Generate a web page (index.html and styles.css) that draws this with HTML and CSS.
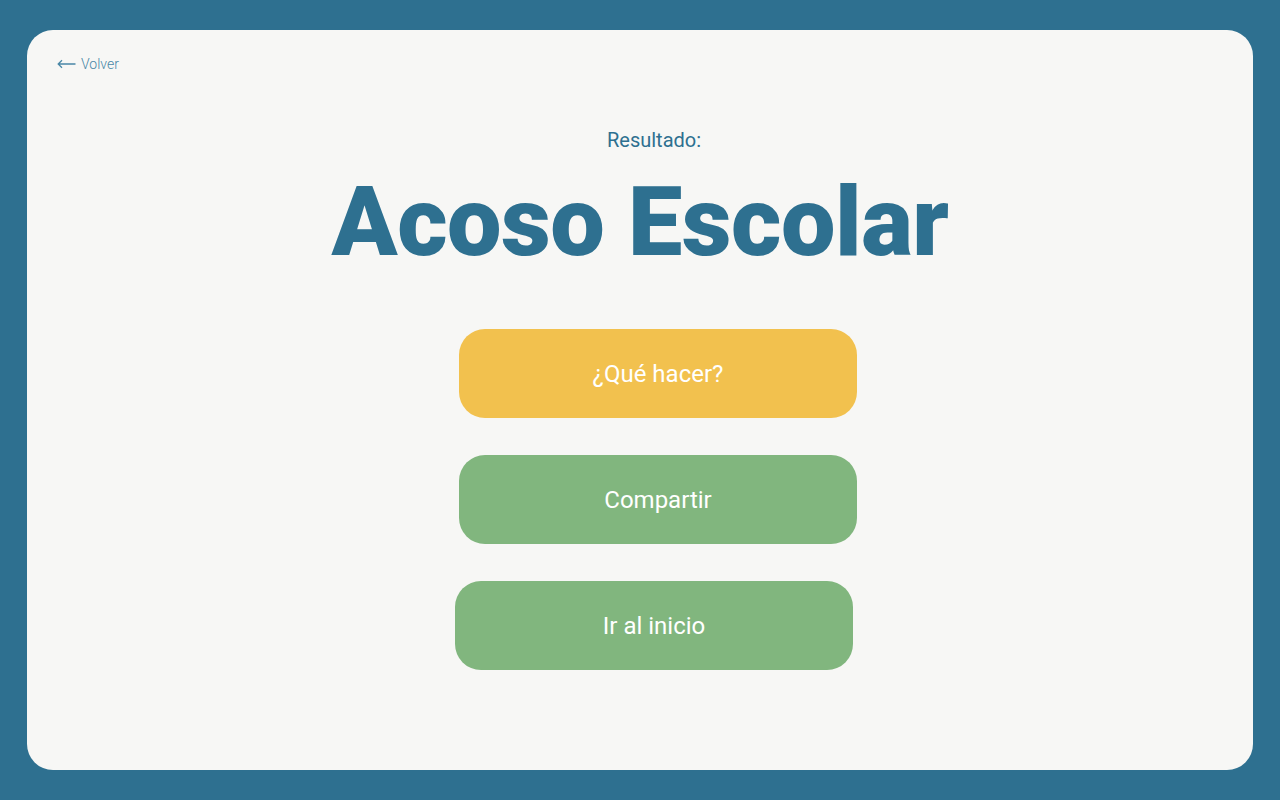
FILE: index.html
```html
<!DOCTYPE html>
<html lang="es">
<head>
<meta charset="utf-8">
<title>Resultado</title>
<link rel="stylesheet" href="styles.css">
</head>
<body>
<main class="card">
  <a class="back" href="#"><svg class="arrow" width="19" height="10" viewBox="0 0 19 10" aria-hidden="true"><path d="M18.5 5H1.2M5 1.2L1.2 5L5 8.8" fill="none" stroke="currentColor" stroke-width="1.3"/></svg><span>Volver</span></a>
  <section class="result">
    <p class="label">Resultado:</p>
    <h1 class="title">Acoso Escolar</h1>
    <div class="actions">
      <button class="btn btn-yellow">¿Qué hacer?</button>
      <button class="btn btn-green">Compartir</button>
      <button class="btn btn-green btn-shift">Ir al inicio</button>
    </div>
  </section>
</main>
</body>
</html>
```
FILE: styles.css
```css
* { box-sizing: border-box; }
html, body { margin: 0; padding: 0; }
body {
  width: 1280px;
  height: 800px;
  background: #2e7090;
  padding: 30px 27px;
  font-family: Roboto, "Noto Sans", sans-serif;
}
.card {
  background: #f7f7f5;
  border-radius: 26px;
  height: 740px;
  padding: 24px 30px 0;
  display: flex;
  flex-direction: column;
}
.back {
  display: flex;
  align-items: center;
  gap: 5px;
  color: #4a87a6;
  text-decoration: none;
  font-size: 14px;
  font-weight: 300;
  line-height: 20px;
  align-self: flex-start;
}
.back .arrow { display: block; }
.result {
  display: flex;
  flex-direction: column;
  align-items: center;
}
.label {
  margin: 54px 0 0 28px;
  font-size: 20px;
  line-height: 24px;
  color: #2e7090;
}
.title {
  margin: 10px 0 0 0;
  font-size: 97px;
  line-height: 120px;
  font-weight: 900;
  color: #2e7090;
  letter-spacing: -0.5px;
}
.actions {
  margin-top: 47px;
  display: flex;
  flex-direction: column;
  gap: 37px;
  margin-left: 36px;
}
.btn {
  width: 398px;
  height: 89px;
  border: none;
  border-radius: 26px;
  font-family: Roboto, sans-serif;
  font-size: 24px;
  color: #ffffff;
  cursor: pointer;
}
.btn-yellow { background: #f2c14e; }
.btn-green { background: #81b67e; }
.btn-shift { margin-left: -4px; }
```
